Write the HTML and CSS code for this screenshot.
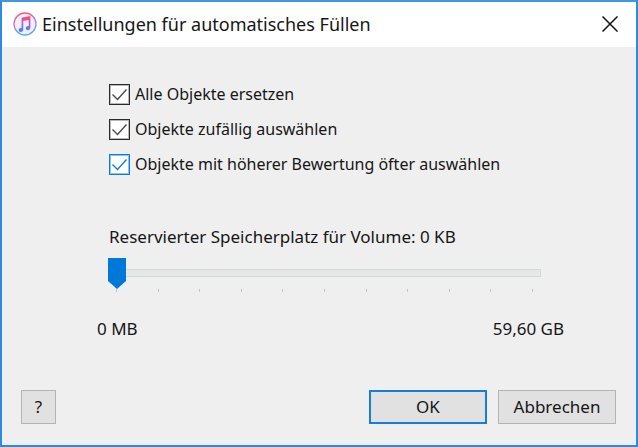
FILE: index.html
```html
<!DOCTYPE html>
<html lang="de">
<head>
<meta charset="utf-8">
<meta name="viewport" content="width=device-width, initial-scale=1">
<title>Einstellungen für automatisches Füllen</title>
<link rel="stylesheet" href="styles.css">
</head>
<body>
<form class="dialog">
  <header class="titlebar">
    <svg class="logo" viewBox="0 0 24 24" aria-hidden="true">
      <defs>
        <linearGradient id="ring" x1="0.3" y1="0" x2="0.6" y2="1">
          <stop offset="0" stop-color="#fa5b70"/>
          <stop offset="0.5" stop-color="#b47be0"/>
          <stop offset="1" stop-color="#3db8f0"/>
        </linearGradient>
        <linearGradient id="note" gradientUnits="userSpaceOnUse" x1="14" y1="5" x2="10" y2="19">
          <stop offset="0" stop-color="#fb4f68"/>
          <stop offset="0.5" stop-color="#a861dc"/>
          <stop offset="1" stop-color="#3a8cf2"/>
        </linearGradient>
      </defs>
      <circle cx="12" cy="12" r="11" fill="#f3eef9" stroke="url(#ring)" stroke-width="1.3"/>
      <path fill="url(#note)" d="M8.600 5.800 17.400 4v11.500c0 1.700-1 2.600-2.500 2.700-1.300 0-2.200-.7-2.200-1.900 0-1.200.9-2 2.200-2.200l.8-.2V8l-5.400 1.100v8.200c0 1.700-1 2.600-2.500 2.700-1.300 0-2.200-.7-2.200-1.900 0-1.200.9-2 2.200-2.200l.8-.2z"/>
    </svg>
    <h1 class="title">Einstellungen für automatisches Füllen</h1>
    <button class="close" type="button" aria-label="Schließen">
      <svg class="close-icon" viewBox="0 0 16 16" aria-hidden="true"><path d="M.5.5l15 15M15.500.5l-15 15" fill="none" stroke="#111" stroke-width="1.500"/></svg>
    </button>
  </header>
  <main class="content">
    <div class="options">
      <label class="option"><input class="check" type="checkbox" checked>Alle Objekte ersetzen</label>
      <label class="option"><input class="check" type="checkbox" checked>Objekte zufällig auswählen</label>
      <label class="option"><input class="check check-active" type="checkbox" checked>Objekte mit höherer Bewertung öfter auswählen</label>
    </div>
    <label class="caption" for="space">Reservierter Speicherplatz für Volume: 0 KB</label>
    <div class="slider">
      <input class="range" id="space" type="range" min="0" max="10" value="0">
      <div class="ticks" aria-hidden="true"><i></i><i></i><i></i><i></i><i></i><i></i><i></i><i></i><i></i><i></i><i></i></div>
    </div>
    <div class="limits"><span>0 MB</span><span>59,60 GB</span></div>
  </main>
  <footer class="actions">
    <button class="button help" type="button">?</button>
    <button class="button primary" type="submit">OK</button>
    <button class="button" type="button">Abbrechen</button>
  </footer>
</form>
</body>
</html>
```
FILE: styles.css
```css
* {
  box-sizing: border-box;
}

body {
  margin: 0;
  font: 17px/24px "Noto Sans", "Open Sans", sans-serif;
  color: #161616;
}

.dialog {
  display: flex;
  flex-direction: column;
  min-height: 100vh;
  border: 2px solid #2e8ade;
  border-top-color: #4296dd;
  background: #efefef;
}

.titlebar {
  display: flex;
  align-items: center;
  gap: 5px;
  height: 45px;
  padding: 0 16px 2px 11px;
  background: #fff;
}

.logo {
  width: 24px;
  height: 24px;
}

.title {
  flex: 1;
  margin: 0;
  font-size: 18px;
  font-weight: 400;
}

.close {
  display: flex;
  padding: 2px;
  border: 0;
  background: none;
}

.close-icon {
  width: 16px;
  height: 16px;
}

.content {
  flex: 1;
  padding: 35px 72px 0 95px;
}

.options {
  display: grid;
  gap: 11px;
  padding-left: 12px;
  font-size: 16px;
}

.option {
  display: flex;
  align-items: center;
  gap: 5px;
}

.check {
  appearance: none;
  width: 21px;
  height: 21px;
  margin: 0;
  border: 1px solid #2b2b2b;
  outline: 1px solid #2b2b2b55;
  outline-offset: -2px;
  background: #fff;
}

.check:checked {
  background: #fff url("data:image/svg+xml,%3Csvg xmlns='http://www.w3.org/2000/svg' viewBox='0 0 19 19'%3E%3Cpath d='M2.500 9.500l5 5 9-10' fill='none' stroke='%23484848' stroke-width='1.400'/%3E%3C/svg%3E") center / 19px;
}

.check-active {
  border-color: #0c7ddd;
  outline-color: #0c7ddd77;
}

.check-active:checked {
  background-image: url("data:image/svg+xml,%3Csvg xmlns='http://www.w3.org/2000/svg' viewBox='0 0 19 19'%3E%3Cpath d='M2.500 9.500l5 5 9-10' fill='none' stroke='%230c7ddd' stroke-width='1.400'/%3E%3C/svg%3E");
}

.caption {
  display: block;
  margin: 49px 0 8px 12px;
}

.slider {
  padding: 0 23px 0 11px;
}

.range {
  appearance: none;
  display: block;
  width: 100%;
  height: 32px;
  margin: 0;
  background: none;
}

.range::-webkit-slider-runnable-track {
  height: 8px;
  border: 1px solid #d5d9d8;
  background: #e4e8e7;
}

.range::-webkit-slider-thumb {
  appearance: none;
  width: 18px;
  height: 31px;
  margin-top: -12px;
  margin-left: -1px;
  background: #0078d7;
  clip-path: polygon(0 0, 100% 0, 100% 74%, 50% 100%, 0 74%);
}

.ticks {
  display: flex;
  justify-content: space-between;
  padding: 0 8px;
}

.ticks i {
  width: 1px;
  height: 3px;
  background: #c4c4c4;
}

.limits {
  display: flex;
  justify-content: space-between;
  margin-top: 25px;
}

.actions {
  display: flex;
  gap: 11px;
  padding: 0 20px 21px 19px;
}

.button {
  width: 118px;
  height: 34px;
  padding: 0;
  border: 1px solid #b4b4b4;
  background: #e1e1e1;
  color: inherit;
  font: inherit;
}

.help {
  width: 35px;
  margin-right: auto;
}

.primary {
  border: 2px solid #137fd9;
}
```
